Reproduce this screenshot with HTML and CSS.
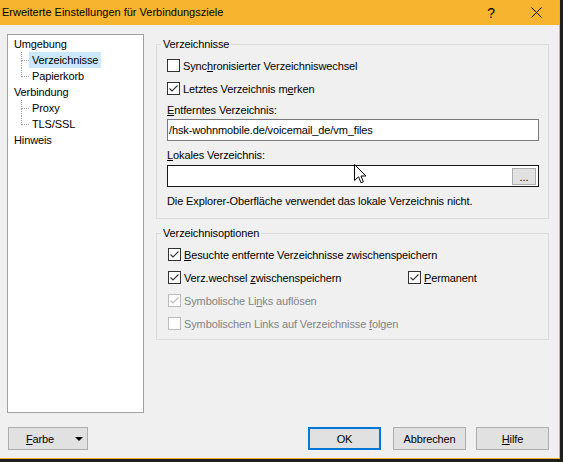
FILE: index.html
```html
<!DOCTYPE html>
<html lang="de">
<head>
<meta charset="utf-8">
<title>Erweiterte Einstellungen für Verbindungsziele</title>
<link rel="stylesheet" href="styles.css">
</head>
<body>
<div class="window">
  <div class="titlebar">
    <span class="title">Erweiterte Einstellungen für Verbindungsziele</span>
    <span class="cap-btn help">?</span>
    <span class="cap-btn close"><svg width="11" height="11" viewBox="0 0 11 11"><path d="M0.5 0.5L10.5 10.5M10.5 0.5L0.5 10.5" stroke="#000" stroke-width="1"/></svg></span>
  </div>
  <div class="main">
    <div class="tree">
      <div class="node">Umgebung</div>
      <ul class="children">
        <li><span class="item sel">Verzeichnisse</span></li>
        <li class="last"><span class="item">Papierkorb</span></li>
      </ul>
      <div class="node">Verbindung</div>
      <ul class="children">
        <li><span class="item">Proxy</span></li>
        <li class="last"><span class="item">TLS/SSL</span></li>
      </ul>
      <div class="node">Hinweis</div>
    </div>
    <div class="panel">
      <fieldset class="group g1">
        <legend>Verzeichnisse</legend>
        <div class="rows">
          <div class="check"><span class="cb"></span><span>Sync<u>h</u>ronisierter Verzeichniswechsel</span></div>
          <div class="check"><span class="cb on"><svg viewBox="0 0 11 11"><polyline points="1.5,5.5 4,8 9.5,2.5" fill="none" stroke="#333" stroke-width="1.1"/></svg></span><span>Letztes Verzeichnis m<u>e</u>rken</span></div>
          <div class="label l1"><u>E</u>ntferntes Verzeichnis:</div>
          <div class="edit e1">/hsk-wohnmobile.de/voicemail_de/vm_files</div>
          <div class="label l2"><u>L</u>okales Verzeichnis:</div>
          <div class="edit e2">
            <span class="browse">...</span>
            <svg class="cursor" width="13" height="20" viewBox="0 0 13 20"><path d="M0.5 0.5L0.5 16.5L4.5 12.8L7 18.8L9.4 17.8L7 12L12 12Z" fill="#fff" stroke="#000" stroke-width="1" stroke-linejoin="miter"/></svg>
          </div>
          <div class="note">Die Explorer-Oberfläche verwendet das lokale Verzeichnis nicht.</div>
        </div>
      </fieldset>
      <fieldset class="group g2">
        <legend>Verzeichnisoptionen</legend>
        <div class="rows">
          <div class="check"><span class="cb on"><svg viewBox="0 0 11 11"><polyline points="1.5,5.5 4,8 9.5,2.5" fill="none" stroke="#333" stroke-width="1.1"/></svg></span><span><u>B</u>esuchte entfernte Verzeichnisse zwischenspeichern</span></div>
          <div class="pair">
            <div class="check first"><span class="cb on"><svg viewBox="0 0 11 11"><polyline points="1.5,5.5 4,8 9.5,2.5" fill="none" stroke="#333" stroke-width="1.1"/></svg></span><span>Verz.wechsel <u>z</u>wischenspeichern</span></div>
            <div class="check"><span class="cb on"><svg viewBox="0 0 11 11"><polyline points="1.5,5.5 4,8 9.5,2.5" fill="none" stroke="#333" stroke-width="1.1"/></svg></span><span><u>P</u>ermanent</span></div>
          </div>
          <div class="check disabled"><span class="cb on"><svg viewBox="0 0 11 11"><polyline points="1.5,5.5 4,8 9.5,2.5" fill="none" stroke="#bcbcbc" stroke-width="1.1"/></svg></span><span>Symbolische Li<u>n</u>ks auflösen</span></div>
          <div class="check disabled"><span class="cb"></span><span>Symbolischen Links auf Verzeichnisse <u>f</u>olgen</span></div>
        </div>
      </fieldset>
    </div>
  </div>
  <div class="footer">
    <div class="btn farbe"><span class="btn-label"><u>F</u>arbe</span><span class="arrow"></span></div>
    <div class="btn ok default">OK</div>
    <div class="btn cancel">Abbrechen</div>
    <div class="btn help-btn"><u>H</u>ilfe</div>
  </div>
</div>
</body>
</html>
```

FILE: styles.css
```css
* { box-sizing: border-box; }

html, body {
  margin: 0;
  padding: 0;
  background: #1f1f1f;
  width: 563px;
  height: 462px;
  overflow: hidden;
}

body {
  font-family: "Liberation Sans", Arial, sans-serif;
  font-size: 11px;
  letter-spacing: -0.12px;
  color: #000;
}

u { text-decoration: underline; text-underline-offset: 1px; }

.window {
  width: 560px;
  height: 459px;
  background: #f0f0f0;
  border-right: 1px solid #f3b02b;
  border-bottom: 1px solid #f3b02b;
  display: flex;
  flex-direction: column;
}

/* title bar */
.titlebar {
  height: 25px;
  background: #f7b52f;
  display: flex;
  align-items: center;
  padding-left: 2px;
  flex-shrink: 0;
}
.title {
  font-size: 11px;
  letter-spacing: 0;
  line-height: 25px;
  flex: 1;
}
.cap-btn {
  width: 46px;
  height: 25px;
  display: flex;
  align-items: center;
  justify-content: center;
}
.help {
  font-size: 14px;
  padding-top: 1px;
  padding-left: 2px;
}
.close svg { display: block; }

/* main */
.main {
  display: flex;
  padding: 9px 0 0 7px;
  flex-shrink: 0;
}

.tree {
  width: 137px;
  height: 379px;
  background: #fff;
  border: 1px solid #a0a0a0;
  padding: 1px 0 0 6px;
  line-height: 16px;
}
.node { height: 16px; }
.children {
  list-style: none;
  margin: 0;
  padding: 0 0 0 15px;
}
.children li {
  position: relative;
  height: 16px;
}
.children li::before {
  content: "";
  position: absolute;
  left: -8px;
  top: 0;
  width: 7px;
  height: 8px;
  border-left: 1px dotted #a0a0a0;
  border-bottom: 1px dotted #a0a0a0;
}
.children li::after {
  content: "";
  position: absolute;
  left: -8px;
  top: 8px;
  height: 8px;
  border-left: 1px dotted #a0a0a0;
}
.children li.last::after { display: none; }
.item {
  display: inline-block;
  padding: 0 3px;
  height: 16px;
}
.item.sel { background: #cce8ff; }

.panel {
  margin-left: 12px;
  width: 393px;
  padding-top: 3px;
  display: flex;
  flex-direction: column;
}

.group {
  margin: 0;
  padding: 0;
  min-width: 0;
  border: 1px solid #dcdcdc;
}
.group legend {
  margin-left: 4px;
  padding: 0 2px;
  line-height: 15px;
  font-size: 11px;
}
.g1 .rows { padding: 2px 9px 9px 10px; }
.g2 { margin-top: 7px; }
.g2 .rows { padding: 2px 9px 4px 11px; }

.check {
  height: 23px;
  display: flex;
  align-items: center;
  gap: 3px;
}
.cb {
  width: 13px;
  height: 13px;
  border: 1px solid #333;
  background: #fff;
  display: inline-flex;
  flex-shrink: 0;
}
.cb svg { width: 11px; height: 11px; display: block; }
.disabled { color: #838383; }
.disabled .cb { border-color: #bcbcbc; }

.pair { display: flex; }
.pair .first { width: 240px; }

.label { line-height: 16px; }
.l1 { margin-top: 2px; }
.l2 { margin-top: 6px; }

.edit {
  height: 22px;
  background: #fff;
  border: 1px solid #7a7a7a;
  line-height: 20px;
  padding-left: 1px;
  white-space: nowrap;
}
.e1 { margin-top: 1px; }
.e2 {
  margin-top: 2px;
  border-color: #171717;
  position: relative;
  display: flex;
  justify-content: flex-end;
  align-items: center;
  padding-right: 2px;
}
.browse {
  width: 24px;
  height: 17px;
  background: #e1e1e1;
  border: 1px solid #adadad;
  text-align: center;
  line-height: 16px;
  font-size: 11px;
}
.cursor {
  position: absolute;
  left: 186px;
  top: -2px;
}
.note {
  margin-top: 6px;
  line-height: 16px;
}

/* footer */
.footer {
  display: flex;
  padding: 14px 10px 0 8px;
}
.btn {
  height: 23px;
  width: 73px;
  background: #e1e1e1;
  border: 1px solid #adadad;
  display: flex;
  align-items: center;
  justify-content: center;
}
.farbe {
  width: 80px;
  justify-content: flex-start;
}
.btn-label {
  width: 62px;
  text-align: center;
}
.arrow {
  margin-left: 4px;
  width: 0;
  height: 0;
  border-left: 4px solid transparent;
  border-right: 4px solid transparent;
  border-top: 4px solid #000;
}
.ok {
  margin-left: auto;
  margin-right: 12px;
}
.default {
  border-color: #0078d7;
  box-shadow: inset 0 0 0 1px #0078d7;
}
.cancel { margin-right: 10px; }
```
